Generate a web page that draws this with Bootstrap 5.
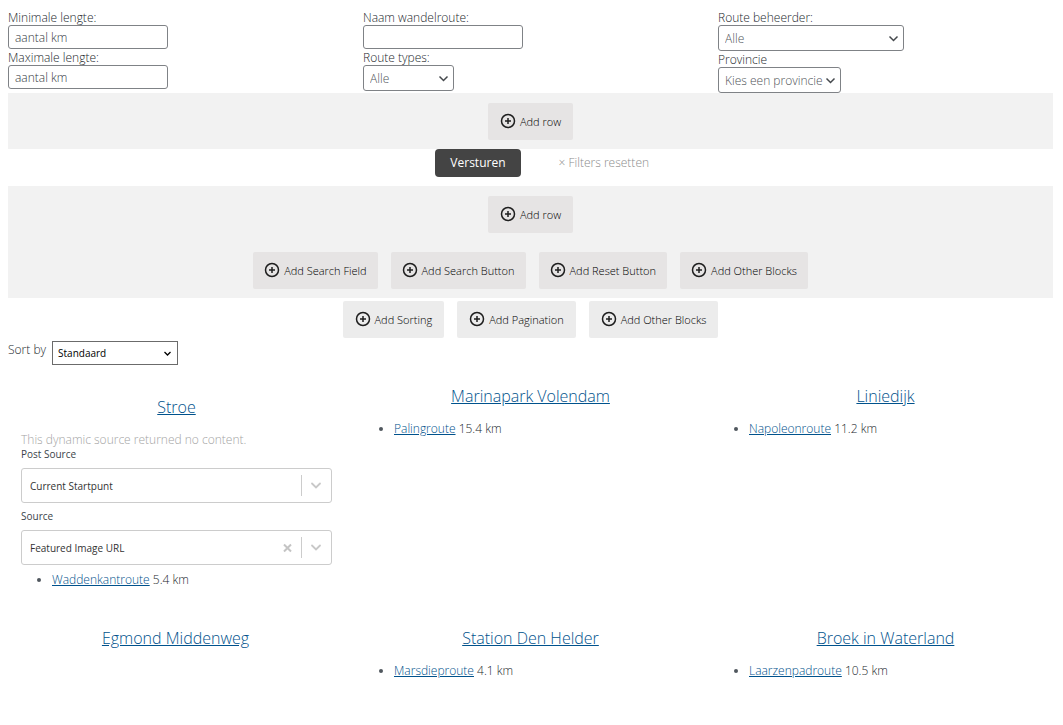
<!DOCTYPE html>
<html lang="nl">
<head>
<meta charset="utf-8">
<meta name="viewport" content="width=device-width, initial-scale=1">
<title>Wandelroutes</title>
<link rel="stylesheet" href="https://cdn.jsdelivr.net/npm/bootstrap@5.3.0/dist/css/bootstrap.min.css">
<style>
  body { font-family: "Open Sans", "Noto Sans", sans-serif; font-size: 12px; font-weight: 300; line-height: 16px; color: #23282d; background: #fff; padding: 9px 10px 20px 8px; }
  a { color: #00528c; }
  .three-up { display: grid; grid-template-columns: repeat(3, minmax(0, 1fr)); column-gap: 20px; }
  .halves { display: grid; grid-template-columns: 1fr 1fr; column-gap: 20px; min-height: 37px; }
  .form-control, .form-select, .btn { font-weight: 300; }
  .filters label { display: block; padding-top: 1px; line-height: 15px; }
  .filters .form-control { width: 160px; height: 24px; min-height: 0; padding: 0 6px; font-size: 12px; line-height: 20px; border: 1px solid #7f8286; border-radius: 3px; }
  .filters .form-control::placeholder { color: #32373c; opacity: 1; }
  .filters .form-select { height: 26px; padding: 2px 17px 0 6px; font-size: 12px; line-height: 20px; color: #505458; border: 1px solid #7f8286; border-radius: 3px; background-position: right 4px center; background-size: 11px 11px;
    background-image: url("data:image/svg+xml,%3csvg xmlns='http://www.w3.org/2000/svg' viewBox='0 0 11 11'%3e%3cpath fill='none' stroke='%2344484c' stroke-width='1.5' d='M1.5 3.5l4 4 4-4'/%3e%3c/svg%3e"); }
  .select-wide { width: 186px; }
  .select-narrow { width: 91px; }
  .select-mid { width: 123px; }
  .tray { background: #f2f2f2; }
  .tray-row { padding: 10px 0 9px; }
  .adders { column-gap: 13px; }
  .btn-add { height: 37px; padding: 0 12px; font-size: 11px; line-height: 16px; color: #000; background: #e6e4e4; border: 0; border-radius: 2px; gap: 4px; }
  .btn-add:hover { background: #dcdada; }
  .btn-add svg { width: 16px; height: 16px; flex: none; margin-bottom: 2px; }
  .tray .adders .btn-add, .adders.tray-row .btn-add { padding: 0 11px; }
  .adders-light { padding-top: 3px; }
  .adders-light .btn-add { background: #ececec; }
  .btn-send { height: 28px; padding: 0 15px; font-size: 12px; font-weight: 400; line-height: 16px; color: #fff; background: #444; border: 0; border-radius: 4px; }
  .btn-clear { height: 28px; padding: 0 18px; font-size: 12px; line-height: 16px; color: #8c8c8c; border: 0; }
  .sorter { padding-top: 3px; gap: 6px; }
  .sorter label { padding-top: 1px; }
  .sorter .form-select { width: 126px; height: 24px; padding: 0 20px 0 5px; font-size: 10px; font-weight: 400; line-height: 20px; color: #000; border: 1px solid #6b6b6b; border-radius: 0; background-position: right 5px center; background-size: 9px 9px;
    background-image: url("data:image/svg+xml,%3csvg xmlns='http://www.w3.org/2000/svg' viewBox='0 0 9 9'%3e%3cpath fill='none' stroke='%23000' stroke-width='1.3' d='M1.5 3l3 3 3-3'/%3e%3c/svg%3e"); }
  .places { padding-top: 20px; row-gap: 28px; }
  .place-selected { padding: 11px 11px 11px 13px; }
  .place h2 { font-size: 16px; line-height: 22px; font-weight: 300; margin: 0 0 14px; text-align: center; }
  .place ul { padding-left: 31px; margin: 0; }
  .place li::marker { color: #50575e; }
  .notice { color: #a4a4a4; }
  .source label { display: block; font-size: 10px; font-weight: 400; line-height: 12px; margin-bottom: 8px; color: #3c434a; }
  .source { margin-bottom: 7px; }
  .source .form-select { height: 35px; padding: 0 60px 0 8px; font-size: 10px; font-weight: 400; line-height: 20px; color: #333; border: 1px solid #ccc; border-radius: 3px; background-position: right center; background-size: 30px 33px;
    background-image: url("data:image/svg+xml,%3csvg xmlns='http://www.w3.org/2000/svg' viewBox='0 0 30 33'%3e%3cpath stroke='%23ccc' d='M.5 6v21'/%3e%3cpath fill='none' stroke='%23c8c8c8' stroke-width='1.8' stroke-linecap='round' d='M11 14.5l4 4 4-4'/%3e%3c/svg%3e"); }
  .btn-x { right: 36px; width: 18px; line-height: 0; color: #c4c4c4; }
</style>
</head>
<body>
<svg class="d-none" xmlns="http://www.w3.org/2000/svg">
  <symbol id="plus" viewBox="0 0 16 16"><g fill="none" stroke="#1e1e1e" stroke-width="1.5"><circle cx="8" cy="8" r="6.5"/><path d="M8 5v6M5 8h6"/></g></symbol>
</svg>

<form class="filters three-up">
  <div>
    <label for="min">Minimale lengte:</label>
    <input id="min" class="form-control" type="text" placeholder="aantal km">
    <label for="max">Maximale lengte:</label>
    <input id="max" class="form-control" type="text" placeholder="aantal km">
  </div>
  <div>
    <label for="name">Naam wandelroute:</label>
    <input id="name" class="form-control" type="text">
    <label for="types">Route types:</label>
    <select id="types" class="form-select select-narrow"><option>Alle</option></select>
  </div>
  <div>
    <label for="owner">Route beheerder:</label>
    <select id="owner" class="form-select select-wide"><option>Alle</option></select>
    <label for="province">Provincie</label>
    <select id="province" class="form-select select-mid"><option>Kies een provincie</option></select>
  </div>
</form>

<div class="tray tray-row d-flex justify-content-center">
  <button type="button" class="btn btn-add d-inline-flex align-items-center"><svg aria-hidden="true"><use href="#plus"/></svg>Add row</button>
</div>

<div class="halves">
  <div class="text-end"><button type="submit" class="btn btn-send">Versturen</button></div>
  <div><button type="reset" class="btn btn-clear">× Filters resetten</button></div>
</div>

<div class="tray">
  <div class="tray-row d-flex justify-content-center">
    <button type="button" class="btn btn-add d-inline-flex align-items-center"><svg aria-hidden="true"><use href="#plus"/></svg>Add row</button>
  </div>
  <div class="tray-row adders d-flex flex-wrap justify-content-center">
    <button type="button" class="btn btn-add d-inline-flex align-items-center"><svg aria-hidden="true"><use href="#plus"/></svg>Add Search Field</button>
    <button type="button" class="btn btn-add d-inline-flex align-items-center"><svg aria-hidden="true"><use href="#plus"/></svg>Add Search Button</button>
    <button type="button" class="btn btn-add d-inline-flex align-items-center"><svg aria-hidden="true"><use href="#plus"/></svg>Add Reset Button</button>
    <button type="button" class="btn btn-add d-inline-flex align-items-center"><svg aria-hidden="true"><use href="#plus"/></svg>Add Other Blocks</button>
  </div>
</div>

<div class="adders adders-light d-flex flex-wrap justify-content-center">
  <button type="button" class="btn btn-add d-inline-flex align-items-center"><svg aria-hidden="true"><use href="#plus"/></svg>Add Sorting</button>
  <button type="button" class="btn btn-add d-inline-flex align-items-center"><svg aria-hidden="true"><use href="#plus"/></svg>Add Pagination</button>
  <button type="button" class="btn btn-add d-inline-flex align-items-center"><svg aria-hidden="true"><use href="#plus"/></svg>Add Other Blocks</button>
</div>

<div class="sorter d-flex align-items-start">
  <label for="sort">Sort by</label>
  <select id="sort" class="form-select"><option>Standaard</option></select>
</div>

<main class="places three-up">
  <section class="place place-selected">
    <h2><a href="#">Stroe</a></h2>
    <div class="notice">This dynamic source returned no content.</div>
    <div class="source">
      <label for="post">Post Source</label>
      <select id="post" class="form-select"><option>Current Startpunt</option></select>
    </div>
    <div class="source">
      <label for="src">Source</label>
      <div class="position-relative">
        <select id="src" class="form-select"><option>Featured Image URL</option></select>
        <button type="button" class="btn-x btn p-0 border-0 position-absolute top-50 translate-middle-y" aria-label="Clear"><svg width="9" height="9" viewBox="0 0 9 9" fill="none" stroke="currentColor" stroke-width="2"><path d="M1 1l7 7M8 1L1 8"/></svg></button>
      </div>
    </div>
    <ul><li><a href="#">Waddenkantroute</a> 5.4 km</li></ul>
  </section>
  <section class="place">
    <h2><a href="#">Marinapark Volendam</a></h2>
    <ul><li><a href="#">Palingroute</a> 15.4 km</li></ul>
  </section>
  <section class="place">
    <h2><a href="#">Liniedijk</a></h2>
    <ul><li><a href="#">Napoleonroute</a> 11.2 km</li></ul>
  </section>
  <section class="place">
    <h2><a href="#">Egmond Middenweg</a></h2>
  </section>
  <section class="place">
    <h2><a href="#">Station Den Helder</a></h2>
    <ul><li><a href="#">Marsdieproute</a> 4.1 km</li></ul>
  </section>
  <section class="place">
    <h2><a href="#">Broek in Waterland</a></h2>
    <ul><li><a href="#">Laarzenpadroute</a> 10.5 km</li></ul>
  </section>
</main>
<script src="https://cdn.jsdelivr.net/npm/bootstrap@5.3.0/dist/js/bootstrap.bundle.min.js"></script>
</body>
</html>
